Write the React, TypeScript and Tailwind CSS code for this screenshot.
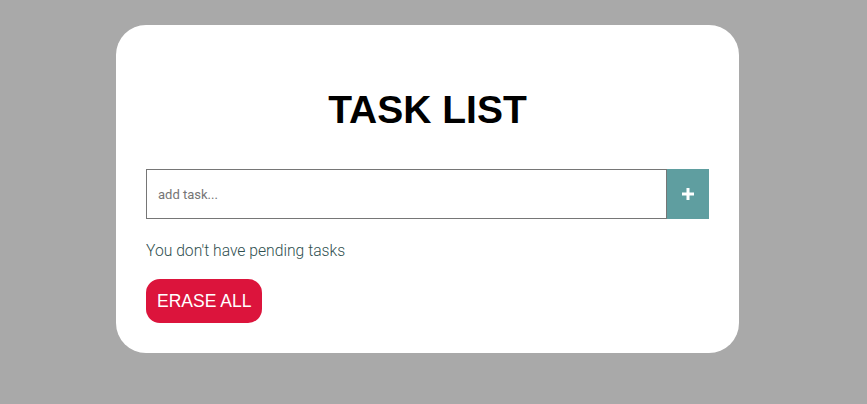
export default function App() {
  return (
    <div className="min-h-[404px] w-full bg-[#a9a9a9] pt-[25px]">
      <div className="ml-[116px] w-[623px] rounded-[30px] bg-white px-[30px] pt-[62px] pb-[30px]">
        <h1 className="text-center font-['Liberation_Sans',Arial,sans-serif] text-[39px] leading-[45px] font-bold text-black">
          TASK LIST
        </h1>
        <div className="mt-[37px] flex h-[50px]">
          <input
            type="text"
            placeholder="add task..."
            className="h-full flex-1 border border-[#767676] px-[11px] font-['Roboto',sans-serif] text-[13px] text-[#333] placeholder:text-[#757575] outline-none"
          />
          <button
            type="button"
            className="flex h-full w-[42px] items-center justify-center bg-[#5f9ea0] text-white"
          >
            <svg width="12" height="12" viewBox="0 0 12 12" fill="currentColor">
              <rect x="4.5" y="0" width="3" height="12" />
              <rect x="0" y="4.5" width="12" height="3" />
            </svg>
          </button>
        </div>
        <p className="mt-[22px] font-['Roboto',sans-serif] text-[15.7px] leading-[20px] font-light text-[#2f4f4f]">
          You don't have pending tasks
        </p>
        <button
          type="button"
          className="mt-[18px] h-[44px] rounded-[14px] bg-[#dc143c] px-[11px] font-['Liberation_Sans',Arial,sans-serif] text-[17.5px] text-white"
        >
          ERASE ALL
        </button>
      </div>
    </div>
  );
}
